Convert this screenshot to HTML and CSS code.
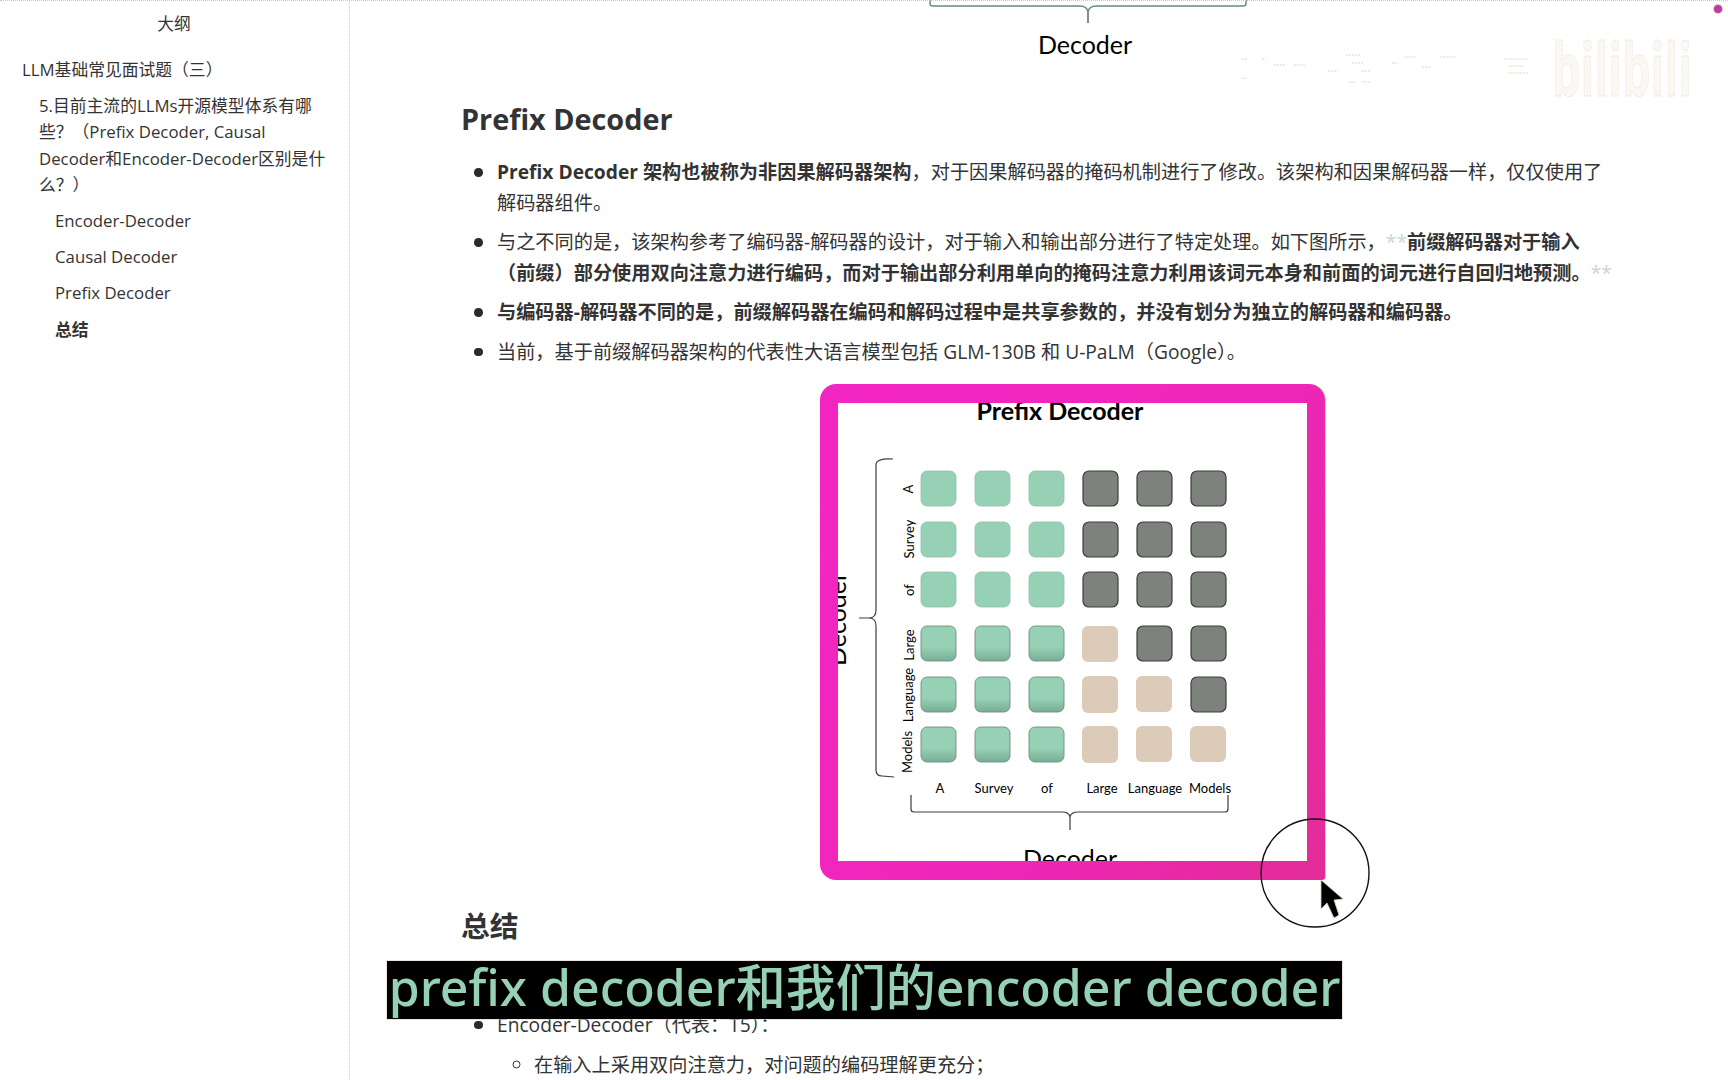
FILE: index.html
```html
<!DOCTYPE html>
<html lang="zh-CN">
<head>
<meta charset="utf-8">
<title>LLM基础常见面试题（三）</title>
<link rel="stylesheet" href="styles.css">
</head>
<body>
<div class="app">
  <aside class="sidebar">
    <div class="outline-title">大纲</div>
    <nav class="outline">
      <div class="ol-item ol-1">LLM基础常见面试题（三）</div>
      <div class="ol-item ol-2">5.目前主流的LLMs开源模型体系有哪些？（Prefix Decoder, Causal Decoder和Encoder-Decoder区别是什么？）</div>
      <div class="ol-item ol-3">Encoder-Decoder</div>
      <div class="ol-item ol-3">Causal Decoder</div>
      <div class="ol-item ol-3">Prefix Decoder</div>
      <div class="ol-item ol-3 ol-active">总结</div>
    </nav>
  </aside>
  <main class="doc">
    <svg class="fig-tail" viewBox="838 0 469 62" width="469" height="62">
      <path class="bracket-teal" d="M930 0 V4 Q930 6 933 6 H1080 Q1087 6 1088 12 Q1089 6 1096 6 H1243 Q1246 6 1246 4 V0"/>
      <path class="bracket" d="M1088 12 V23"/>
      <text class="dia-big" x="1085" y="54" text-anchor="middle">Decoder</text>
    </svg>
    <h2 class="h-first">Prefix Decoder</h2>
    <ul class="list">
      <li><strong>Prefix Decoder 架构也被称为非因果解码器架构</strong>，对于因果解码器的掩码机制进行了修改。该架构和因果解码器一样，仅仅使用了解码器组件。</li>
      <li>与之不同的是，该架构参考了编码器-解码器的设计，对于输入和输出部分进行了特定处理。如下图所示，<span class="stars">**</span><strong>前缀解码器对于输入（前缀）部分使用双向注意力进行编码，而对于输出部分利用单向的掩码注意力利用该词元本身和前面的词元进行自回归地预测。</strong><span class="stars">**</span></li>
      <li><strong>与编码器-解码器不同的是，前缀解码器在编码和解码过程中是共享参数的，并没有划分为独立的解码器和编码器。</strong></li>
      <li>当前，基于前缀解码器架构的代表性大语言模型包括 GLM-130B 和 U-PaLM（Google）。</li>
    </ul>
    <figure class="figure">
      <svg class="dia" viewBox="838 403 469 458" width="469" height="458">
        <defs>
          <linearGradient id="greenShade" x1="0" y1="0" x2="0" y2="1">
            <stop offset="0" stop-color="#96d1b5"/>
            <stop offset="0.6" stop-color="#96d1b5"/>
            <stop offset="1" stop-color="#78ad95"/>
          </linearGradient>
        </defs>
        <text class="dia-title" x="1060" y="420" text-anchor="middle">Prefix Decoder</text>
        <text class="dia-big" transform="translate(846 619) rotate(-90)" text-anchor="middle">Decoder</text>
        <path class="bracket" d="M893 459 Q877 458 876 464 V610 Q876 618 869 618 H859 H869 Q876 618 876 626 V770 Q876 776 882 776 L894 777"/>

        <g class="row-labels">
          <text transform="translate(913 489) rotate(-90)" text-anchor="middle">A</text>
          <text transform="translate(914 539) rotate(-90)" text-anchor="middle">Survey</text>
          <text transform="translate(914 590) rotate(-90)" text-anchor="middle">of</text>
          <text transform="translate(914 645) rotate(-90)" text-anchor="middle">Large</text>
          <text transform="translate(913 695) rotate(-90)" text-anchor="middle">Language</text>
          <text transform="translate(912 752) rotate(-90)" text-anchor="middle">Models</text>
        </g>

        <g class="cells">
          <rect class="c-g" x="921" y="471" width="35" height="35" rx="6"/><rect class="c-g" x="975" y="471" width="35" height="35" rx="6"/><rect class="c-g" x="1029" y="471" width="35" height="35" rx="6"/><rect class="c-d" x="1083" y="471" width="35" height="35" rx="6"/><rect class="c-d" x="1137" y="471" width="35" height="35" rx="6"/><rect class="c-d" x="1191" y="471" width="35" height="35" rx="6"/>
          <rect class="c-g" x="921" y="522" width="35" height="35" rx="6"/><rect class="c-g" x="975" y="522" width="35" height="35" rx="6"/><rect class="c-g" x="1029" y="522" width="35" height="35" rx="6"/><rect class="c-d" x="1083" y="522" width="35" height="35" rx="6"/><rect class="c-d" x="1137" y="522" width="35" height="35" rx="6"/><rect class="c-d" x="1191" y="522" width="35" height="35" rx="6"/>
          <rect class="c-g" x="921" y="572" width="35" height="35" rx="6"/><rect class="c-g" x="975" y="572" width="35" height="35" rx="6"/><rect class="c-g" x="1029" y="572" width="35" height="35" rx="6"/><rect class="c-d" x="1083" y="572" width="35" height="35" rx="6"/><rect class="c-d" x="1137" y="572" width="35" height="35" rx="6"/><rect class="c-d" x="1191" y="572" width="35" height="35" rx="6"/>
          <rect class="c-s" x="921" y="626" width="35" height="35" rx="6"/><rect class="c-s" x="975" y="626" width="35" height="35" rx="6"/><rect class="c-s" x="1029" y="626" width="35" height="35" rx="6"/><rect class="c-t" x="1082" y="626" width="36" height="36" rx="6"/><rect class="c-d" x="1137" y="626" width="35" height="35" rx="6"/><rect class="c-d" x="1191" y="626" width="35" height="35" rx="6"/>
          <rect class="c-s" x="921" y="677" width="35" height="35" rx="6"/><rect class="c-s" x="975" y="677" width="35" height="35" rx="6"/><rect class="c-s" x="1029" y="677" width="35" height="35" rx="6"/><rect class="c-t" x="1082" y="676" width="36" height="37" rx="6"/><rect class="c-t" x="1136" y="676" width="36" height="36" rx="6"/><rect class="c-d" x="1191" y="677" width="35" height="35" rx="6"/>
          <rect class="c-s" x="921" y="727" width="35" height="35" rx="6"/><rect class="c-s" x="975" y="727" width="35" height="35" rx="6"/><rect class="c-s" x="1029" y="727" width="35" height="35" rx="6"/><rect class="c-t" x="1082" y="726" width="36" height="37" rx="6"/><rect class="c-t" x="1136" y="726" width="36" height="36" rx="6"/><rect class="c-t" x="1190" y="726" width="36" height="36" rx="6"/>
        </g>

        <g class="col-labels" text-anchor="middle">
          <text x="940" y="793">A</text>
          <text x="994" y="793">Survey</text>
          <text x="1047" y="793">of</text>
          <text x="1102" y="793">Large</text>
          <text x="1155" y="793">Language</text>
          <text x="1210" y="793">Models</text>
        </g>
        <path class="bracket" d="M911 795 V809 Q911 812 914 812 H1062 Q1069 812 1070 817 Q1071 812 1078 812 H1225 Q1228 812 1228 809 V795 M1070 817 V830"/>
        <text class="dia-big" x="1070" y="868" text-anchor="middle">Decoder</text>
      </svg>
    </figure>
    <h2 class="h-summary">总结</h2>
    <ul class="list list-summary">
      <li>Encoder-Decoder（代表：T5）：
        <ul class="sublist">
          <li>在输入上采用双向注意力，对问题的编码理解更充分；</li>
        </ul>
      </li>
    </ul>
  </main>
</div>

<svg class="watermark" viewBox="0 0 480 70" width="480" height="70">
  <g class="wm-dash">
    <path d="M0 21 H6 M20 21 H24 M32 27 H44 M52 27 H64 M86 33 H96 M104 17 H118 M110 25 H122 M120 33 H128 M150 25 H156 M162 19 H174 M180 29 H188 M198 19 H214 M0 40 H6 M106 44 H114 M120 44 H128 M262 21 H286 M266 28 H282 M266 35 H286"/>
  </g>
  <text class="wm-logo" x="310" y="58" textLength="140" lengthAdjust="spacingAndGlyphs">bilibili</text>
</svg>
<div class="rec-dot"></div>

<div class="subtitle">prefix decoder和我们的encoder decoder</div>

<svg class="pointer" viewBox="0 0 112 112" width="112" height="112">
  <circle class="pointer-ring" cx="56" cy="56" r="54"/>
  <path class="pointer-arrow" d="M62 63 L62 92 L68 86 L75 101 L80 98 L75 83 L84 82 Z"/>
</svg>
</body>
</html>
```
FILE: styles.css
```css
* { box-sizing: border-box; }
html, body { margin: 0; padding: 0; background: #fff; }
body {
  height: 1080px;
  overflow: hidden;
  position: relative;
  font-family: "Open Sans", "Noto Sans CJK SC", sans-serif;
  color: #333;
}
body::before {
  content: "";
  position: absolute;
  left: 0;
  right: 0;
  top: 0;
  border-top: 1px dotted #d9c6ae;
}
.app { display: flex; height: 1080px; overflow: hidden; }

/* sidebar */
.sidebar {
  width: 350px;
  flex: none;
  border-right: 1px dotted #d9c6ae;
  padding: 13px 15px 0 22px;
  font-size: 16.8px;
}
.outline-title { text-align: center; line-height: 22px; margin-bottom: 22px; padding-right: 8px; }
.ol-item { line-height: 26.2px; margin-bottom: 10px; }
.ol-2 { padding-left: 17px; }
.ol-3 { padding-left: 33px; }
.ol-active { font-weight: 700; }

/* document */
.doc { flex: 1; min-width: 0; padding-left: 111px; font-size: 19.2px; }
.fig-tail { display: block; margin-left: 377px; }
h2 { font-size: 28.8px; font-weight: 700; margin: 0; line-height: 38px; }
.h-first { margin-top: 38px; margin-bottom: 19px; }
.list { margin: 0; padding: 0 0 0 36px; width: 1152px; list-style: none; }
.list > li { position: relative; line-height: 30.7px; margin-bottom: 8.8px; }
.list > li::before {
  content: "";
  position: absolute;
  left: -23px;
  top: 11px;
  width: 8.5px;
  height: 8.5px;
  border-radius: 50%;
  background: #2a2c2a;
}
.list strong { font-weight: 700; }
.stars { color: #c9d8c8; }
.figure { margin: 16px 0 0 359px; width: 505px; height: 496px; padding: 19px 18px; border-radius: 16px 16px 3px 16px; background: linear-gradient(120deg, #f225c2 0%, #ef26bb 55%, #e32c97 100%); box-shadow: 1px 0 0 #dccbb8; }
.dia { display: block; background: #fff; }
.dia text { font-family: Lato, "Open Sans", sans-serif; fill: #000; }
.dia-title { font-size: 25px; font-weight: 700; }
.dia-big { font-size: 25px; font-family: Lato, "Open Sans", sans-serif; fill: #000; }
.row-labels text, .col-labels text { font-size: 13px; }
.bracket { fill: none; stroke: #3c3c38; stroke-width: 1.2; }
.bracket-teal { fill: none; stroke: #5d8f7c; stroke-width: 1.5; }
.c-g { fill: #96d1b5; stroke: #8fbfa8; stroke-width: 0.8; }
.c-s { fill: url(#greenShade); stroke: #6f8f80; stroke-width: 0.9; }
.c-d { fill: #7e827c; stroke: #3c3f3c; stroke-width: 1.2; }
.c-t { fill: #dccbb8; }
.h-summary { margin-top: 27px; }
.list-summary { margin-top: 65px; }
.sublist { list-style: circle; margin: 10px 0 0; padding: 0 0 0 37px; }
.sublist li { line-height: 30.7px; }

/* overlays */
.subtitle {
  position: absolute;
  left: 387px;
  top: 961px;
  width: 955px;
  height: 58px;
  background: #000;
  color: #96d1b5;
  font-family: "Noto Sans", "Noto Sans CJK SC", sans-serif;
  font-size: 50px;
  font-weight: 500;
  line-height: 52px;
  text-align: center;
  white-space: nowrap;
  box-shadow: 0 0 0 0.5px #dccbb8;
}
.watermark { position: absolute; left: 1242px; top: 38px; }
.wm-dash { fill: none; stroke: #e3d6c5; stroke-width: 1; stroke-dasharray: 2 1; }
.wm-logo { font-family: "Open Sans", sans-serif; font-size: 74px; font-weight: 700; fill: #fbf8f3; stroke: #e3d6c5; stroke-width: 0.8; stroke-dasharray: 1 1.5; }
.rec-dot { position: absolute; left: 1714px; top: 5px; width: 8px; height: 8px; border-radius: 50%; background: #c8379c; box-shadow: 0 0 0 1px #cfd8cc; }
.pointer { position: absolute; left: 1259px; top: 817px; }
.pointer-ring { fill: none; stroke: #111; stroke-width: 1.4; }
.pointer-arrow { fill: #000; stroke: #dccbb8; stroke-width: 0.8; }
```
